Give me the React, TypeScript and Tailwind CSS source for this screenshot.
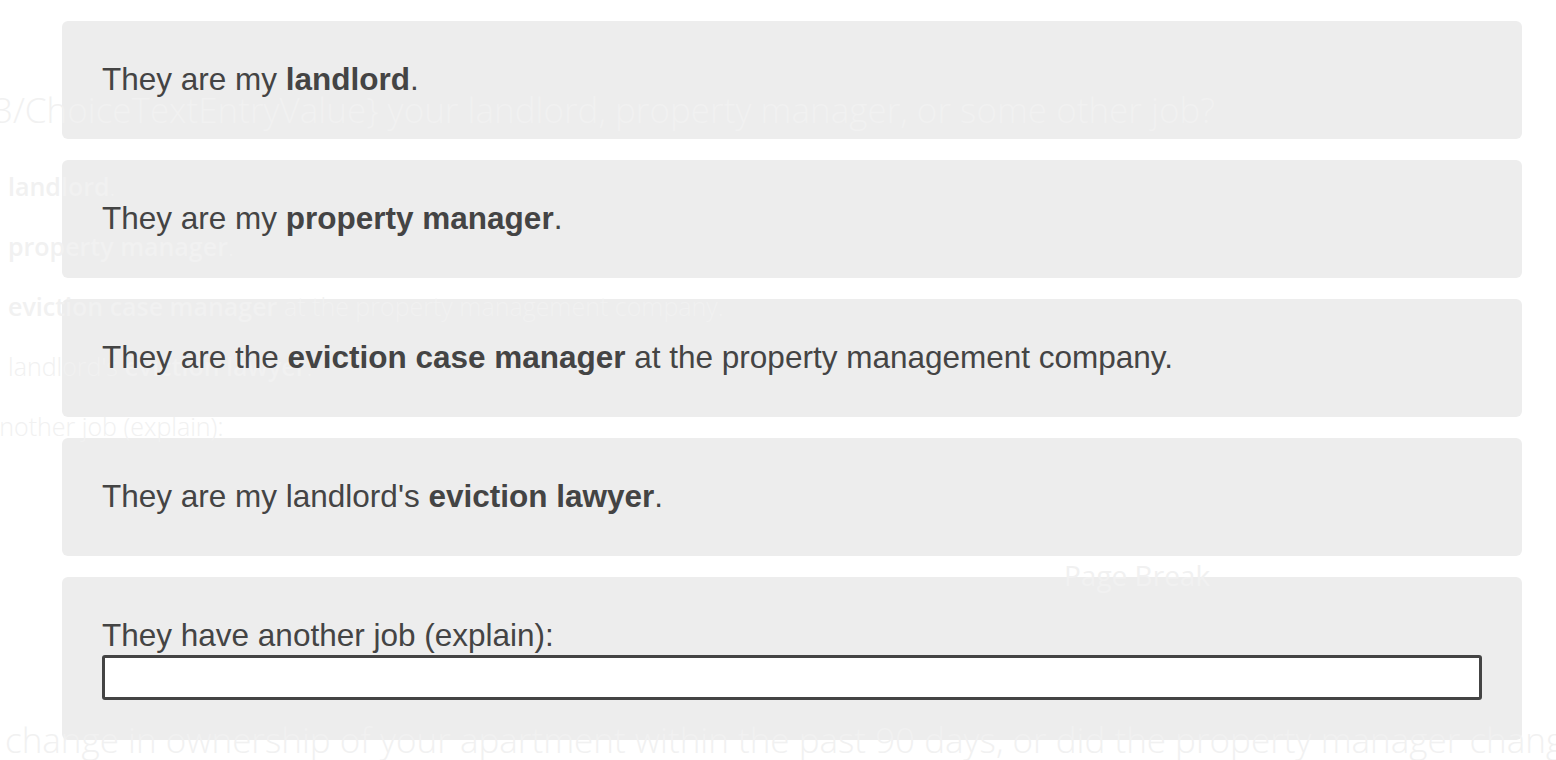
import React from "react";

const choices: React.ReactNode[] = [
  <>
    They are my <b className="font-bold">landlord</b>.
  </>,
  <>
    They are my <b className="font-bold">property manager</b>.
  </>,
  <>
    They are the <b className="font-bold">eviction case manager</b> at the property management company.
  </>,
  <>
    They are my landlord's <b className="font-bold">eviction lawyer</b>.
  </>,
];

export default function App() {
  return (
    <div className="relative h-[760px] w-full overflow-hidden bg-white font-['Liberation_Sans',Arial,sans-serif]">
      {/* Choice cards */}
      <div className="flex flex-col gap-[21px] pl-[62px] pr-[34px] pt-[21px]">
        {choices.map((c, i) => (
          <div
            key={i}
            className="flex h-[118px] items-center rounded-md bg-[#ededed] px-10 text-[31.5px] text-[#444]"
          >
            <span className="relative z-20">{c}</span>
          </div>
        ))}
        <div className="flex flex-col rounded-md bg-[#ededed] px-10 pb-10 pt-[42px] text-[31.5px] text-[#444]">
          <span className="relative z-20 leading-[33px]">They have another job (explain):</span>
          <input
            type="text"
            className="relative z-20 mt-[3px] h-[45px] w-full rounded-[3px] border-[3px] border-[#444] bg-white outline-none"
          />
        </div>
      </div>

      {/* Faded survey page behind the drag preview */}
      <div className="pointer-events-none absolute inset-0 z-10 flex flex-col whitespace-nowrap font-['Open_Sans',sans-serif] font-light text-[#f1f1f1]">
        <div className="mt-[90px] flex justify-end pr-[341px] text-[35px] leading-10">
          <span>{"${q://QID3/ChoiceTextEntryValue}"} your landlord, property manager, or some other job?</span>
        </div>
        <div className="mt-[26px] flex flex-col pl-2 text-[25px] leading-[60px]">
          <div>
            <b className="font-semibold">landlord</b>.
          </div>
          <div>
            <b className="font-semibold">property manager</b>.
          </div>
          <div>
            <b className="font-semibold">eviction case manager</b> at the property management company.
          </div>
          <div>
            landlord's <b className="font-semibold">eviction lawyer</b>.
          </div>
          <div className="-ml-[22px]">another job (explain):</div>
        </div>
        <div className="mt-[103px] pl-[1064px] text-[28px] font-normal leading-8">Page Break</div>
        <div className="mt-[129px] pl-[5px] text-[35px] leading-10">
          change in ownership of your apartment within the past 90 days, or did the property manager change?
        </div>
      </div>
    </div>
  );
}
